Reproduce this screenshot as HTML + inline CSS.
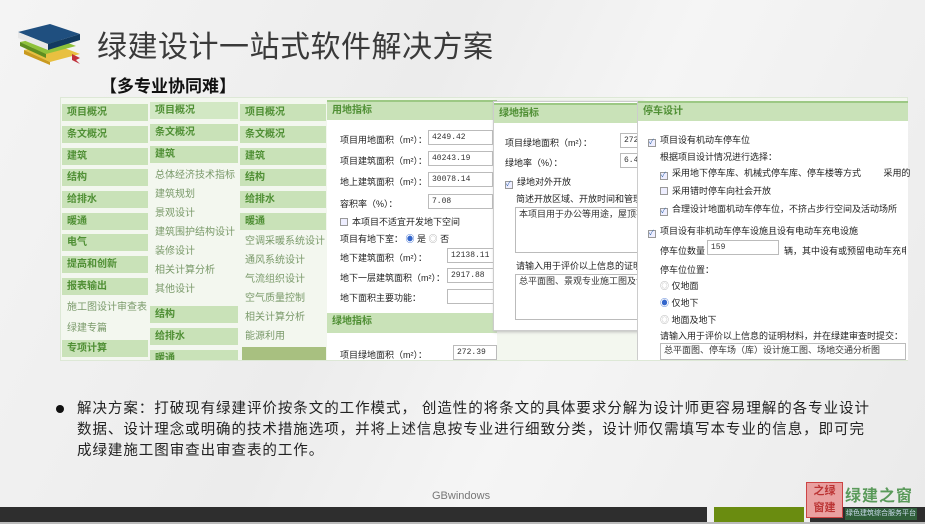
<!DOCTYPE html><html><head><meta charset="utf-8"><style>
*{margin:0;padding:0;box-sizing:border-box}
body{width:925px;height:524px;overflow:hidden;position:relative;font-family:"Liberation Sans","Noto Sans CJK SC",sans-serif;background:linear-gradient(115deg,#f4f4f4 0%,#ececec 40%,#f5f5f5 60%,#eaeaea 100%)}
.a{position:absolute}
.g{position:absolute;background:#c9e2b8;color:#4f8f34;font-size:10px;font-weight:bold;padding-left:5px;line-height:17px;height:17px}
.w{position:absolute;color:#7a9a6a;font-size:10px;line-height:17px;white-space:nowrap}
.f{position:absolute;font-size:9px;color:#222;white-space:nowrap}
.i{position:absolute;border:1px solid #bbb;background:#fff;font-size:8px;font-family:"Liberation Mono",monospace;padding-left:3px;line-height:13px;height:15px;color:#333;white-space:nowrap;overflow:hidden}
.h{position:absolute;background:#c9e2b8;border-top:2px solid #9cc884;color:#4f8f34;font-size:10px;font-weight:bold;padding-left:5px;line-height:18px;height:20px}
.cb{display:inline-block;width:8px;height:8px;border:1px solid #999;background:#eef;margin-right:4px;vertical-align:-1px;font-size:7px;line-height:6px;color:#36a}
</style></head><body>
<svg class="a" style="left:14px;top:14px" width="66" height="52" viewBox="0 0 66 52">
<path d="M10 36 L40 30 L66 40 L36 48 Z" fill="#e8c040"/><path d="M10 36 L36 48 L36 51 L10 40Z" fill="#c99a20"/>
<path d="M6 28 L36 22 L62 32 L32 40 Z" fill="#8fc23a"/><path d="M6 28 L32 40 L32 44 L6 32Z" fill="#5e8e20"/>
<path d="M4 18 L36 10 L66 20 L34 30 Z" fill="#1f4f7f"/><path d="M4 18 L34 30 L34 36 L4 24Z" fill="#e8e8e8"/><path d="M34 30 L66 20 L66 26 L34 36Z" fill="#123a60"/>
<path d="M58 40 L66 44 L62 46 L66 50 L58 46Z" fill="#c0303a"/></svg>
<div class="a" style="left:97px;top:22px;font-size:30px;color:#3a3a3a;letter-spacing:0.5px">绿建设计一站式软件解决方案</div>
<div class="a" style="left:100px;top:72px;font-size:17px;font-weight:bold;color:#111">【多专业协同难】</div>

<div class="a" style="left:60px;top:97px;width:848px;height:264px;background:#f3f7ef;border:1px solid #dde8d6"></div>
<div class="g" style="left:62px;top:104px;width:86px">项目概况</div>
<div class="g" style="left:62px;top:126px;width:86px">条文概况</div>
<div class="g" style="left:62px;top:148px;width:86px">建筑</div>
<div class="g" style="left:62px;top:169px;width:86px">结构</div>
<div class="g" style="left:62px;top:191px;width:86px">给排水</div>
<div class="g" style="left:62px;top:213px;width:86px">暖通</div>
<div class="g" style="left:62px;top:234px;width:86px">电气</div>
<div class="g" style="left:62px;top:256px;width:86px">提高和创新</div>
<div class="g" style="left:62px;top:278px;width:86px">报表输出</div>
<div class="w" style="left:67px;top:299px">施工图设计审查表</div>
<div class="w" style="left:67px;top:320px">绿建专篇</div>
<div class="g" style="left:62px;top:340px;width:86px">专项计算</div>
<div class="g" style="left:150px;top:102px;width:88px;background:#d2e8c4">项目概况</div>
<div class="g" style="left:150px;top:124px;width:88px">条文概况</div>
<div class="g" style="left:150px;top:146px;width:88px">建筑</div>
<div class="w" style="left:155px;top:167px">总体经济技术指标</div>
<div class="w" style="left:155px;top:186px">建筑规划</div>
<div class="w" style="left:155px;top:205px">景观设计</div>
<div class="w" style="left:155px;top:224px">建筑围护结构设计</div>
<div class="w" style="left:155px;top:243px">装修设计</div>
<div class="w" style="left:155px;top:262px">相关计算分析</div>
<div class="w" style="left:155px;top:281px">其他设计</div>
<div class="g" style="left:150px;top:306px;width:88px">结构</div>
<div class="g" style="left:150px;top:328px;width:88px">给排水</div>
<div class="g" style="left:150px;top:350px;width:88px;height:10px;overflow:hidden">暖通</div>
<div class="g" style="left:240px;top:104px;width:86px">项目概况</div>
<div class="g" style="left:240px;top:126px;width:86px">条文概况</div>
<div class="g" style="left:240px;top:148px;width:86px">建筑</div>
<div class="g" style="left:240px;top:169px;width:86px">结构</div>
<div class="g" style="left:240px;top:191px;width:86px">给排水</div>
<div class="g" style="left:240px;top:213px;width:86px">暖通</div>
<div class="w" style="left:245px;top:233px">空调采暖系统设计</div>
<div class="w" style="left:245px;top:252px">通风系统设计</div>
<div class="w" style="left:245px;top:271px">气流组织设计</div>
<div class="w" style="left:245px;top:290px">空气质量控制</div>
<div class="w" style="left:245px;top:309px">相关计算分析</div>
<div class="w" style="left:245px;top:328px">能源利用</div>
<div class="a" style="left:242px;top:347px;width:84px;height:13px;background:#a8c080"></div>
<div class="a" style="left:327px;top:100px;width:170px;height:260px;background:#fff"></div>
<div class="h" style="left:327px;top:100px;width:170px">用地指标</div>
<div class="f" style="left:340px;top:133px">项目用地面积（m²）：</div><div class="i" style="left:428px;top:130px;width:65px">4249.42</div>
<div class="f" style="left:340px;top:154px">项目建筑面积（m²）：</div><div class="i" style="left:428px;top:151px;width:65px">40243.19</div>
<div class="f" style="left:340px;top:175px">地上建筑面积（m²）：</div><div class="i" style="left:428px;top:172px;width:65px">30078.14</div>
<div class="f" style="left:340px;top:197px">容积率（%）：</div><div class="i" style="left:428px;top:194px;width:65px">7.08</div>
<div class="f" style="left:340px;top:215px"><span class="cb"></span>本项目不适宜开发地下空间</div>
<div class="f" style="left:340px;top:232px">项目有地下室： <span style="color:#36c">◉</span> 是 <span style="color:#aaa">◎</span> 否</div>
<div class="f" style="left:340px;top:251px">地下建筑面积（m²）：</div><div class="i" style="left:447px;top:248px;width:50px">12138.11</div>
<div class="f" style="left:340px;top:271px">地下一层建筑面积（m²）：</div><div class="i" style="left:447px;top:268px;width:50px">2917.88</div>
<div class="f" style="left:340px;top:291px">地下面积主要功能：</div><div class="i" style="left:447px;top:289px;width:50px"></div>
<div class="h" style="left:327px;top:313px;width:170px;border-top:0">绿地指标</div>
<div class="f" style="left:340px;top:348px">项目绿地面积（m²）：</div><div class="i" style="left:453px;top:345px;width:44px">272.39</div>
<div class="a" style="left:493px;top:101px;width:150px;height:230px;background:#fff;border:1px solid #ccc;box-shadow:1px 1px 3px #bbb"></div>
<div class="h" style="left:494px;top:103px;width:148px">绿地指标</div>
<div class="f" style="left:505px;top:136px">项目绿地面积（m²）：</div><div class="i" style="left:620px;top:133px;width:22px">272</div>
<div class="f" style="left:505px;top:156px">绿地率（%）：</div><div class="i" style="left:620px;top:153px;width:22px">6.4</div>
<div class="f" style="left:505px;top:175px"><span class="cb">✓</span>绿地对外开放</div>
<div class="f" style="left:516px;top:192px;width:126px;overflow:hidden">简述开放区域、开放时间和管理</div>
<div class="i" style="left:515px;top:207px;width:127px;height:46px;font-family:'Liberation Sans','Noto Sans CJK SC',sans-serif;font-size:9px">本项目用于办公等用途，屋顶花</div>
<div class="f" style="left:516px;top:259px;width:126px;overflow:hidden">请输入用于评价以上信息的证明</div>
<div class="i" style="left:515px;top:274px;width:127px;height:46px;font-family:'Liberation Sans','Noto Sans CJK SC',sans-serif;font-size:9px">总平面图、景观专业施工图及设</div>
<div class="a" style="left:637px;top:101px;width:271px;height:259px;background:#fff;border-left:1px solid #ccc"></div>
<div class="h" style="left:638px;top:101px;width:270px">停车设计</div>
<div class="f" style="left:648px;top:133px"><span class="cb">✓</span>项目设有机动车停车位</div>
<div class="f" style="left:660px;top:150px">根据项目设计情况进行选择：</div>
<div class="f" style="left:660px;top:166px"><span class="cb">✓</span>采用地下停车库、机械式停车库、停车楼等方式 &nbsp; &nbsp; &nbsp; &nbsp; 采用的</div>
<div class="f" style="left:660px;top:184px"><span class="cb"></span>采用错时停车向社会开放</div>
<div class="f" style="left:660px;top:202px"><span class="cb">✓</span>合理设计地面机动车停车位，不挤占步行空间及活动场所</div>
<div class="f" style="left:648px;top:224px"><span class="cb">✓</span>项目设有非机动车停车设施且设有电动车充电设施</div>
<div class="f" style="left:660px;top:244px">停车位数量</div><div class="i" style="left:707px;top:240px;width:72px">159</div>
<div class="f" style="left:784px;top:244px;width:122px;overflow:hidden">辆，其中设有或预留电动车充电</div>
<div class="f" style="left:660px;top:263px">停车位位置：</div>
<div class="f" style="left:660px;top:279px"><span style="color:#aaa">◎</span> 仅地面</div>
<div class="f" style="left:660px;top:296px"><span style="color:#36c">◉</span> 仅地下</div>
<div class="f" style="left:660px;top:313px"><span style="color:#aaa">◎</span> 地面及地下</div>
<div class="f" style="left:660px;top:329px">请输入用于评价以上信息的证明材料，并在绿建审查时提交：</div>
<div class="i" style="left:660px;top:343px;width:246px;height:17px;font-family:'Liberation Sans','Noto Sans CJK SC',sans-serif;font-size:9px">总平面图、停车场（库）设计施工图、场地交通分析图</div>

<div class="a" style="left:56px;top:405px;width:8px;height:8px;border-radius:50%;background:#111"></div>
<div class="a" style="left:77px;top:399px;font-size:14.5px;line-height:21px;color:#222;white-space:nowrap;letter-spacing:0.95px">解决方案：打破现有绿建评价按条文的工作模式， 创造性的将条文的具体要求分解为设计师更容易理解的各专业设计<br>数据、设计理念或明确的技术措施选项，并将上述信息按专业进行细致分类，设计师仅需填写本专业的信息，即可完<br>成绿建施工图审查出审查表的工作。</div>
<div class="a" style="left:432px;top:490px;font-size:11px;color:#777">GBwindows</div>
<div class="a" style="left:0;top:507px;width:707px;height:15px;background:#2e2e2e"></div>
<div class="a" style="left:714px;top:507px;width:90px;height:15px;background:#6a8c10"></div>
<div class="a" style="left:810px;top:507px;width:115px;height:15px;background:#2e2e2e"></div>
<div class="a" style="left:0;top:522px;width:925px;height:2px;background:#bbb"></div>
<div class="a" style="left:806px;top:482px;width:37px;height:36px;background:#e9a0a0;border:1px solid #c44;color:#b33;font-size:11px;line-height:17px;text-align:center;font-weight:bold">之绿<br>窗建</div>
<div class="a" style="left:845px;top:482px;font-size:16px;color:#5a9a5a;font-weight:bold;letter-spacing:1px">绿建之窗</div>
<div class="a" style="left:845px;top:508px;width:72px;height:12px;background:#2f5e3a;color:#cde;font-size:7px;line-height:12px;text-align:center">绿色建筑综合服务平台</div>
</body></html>
